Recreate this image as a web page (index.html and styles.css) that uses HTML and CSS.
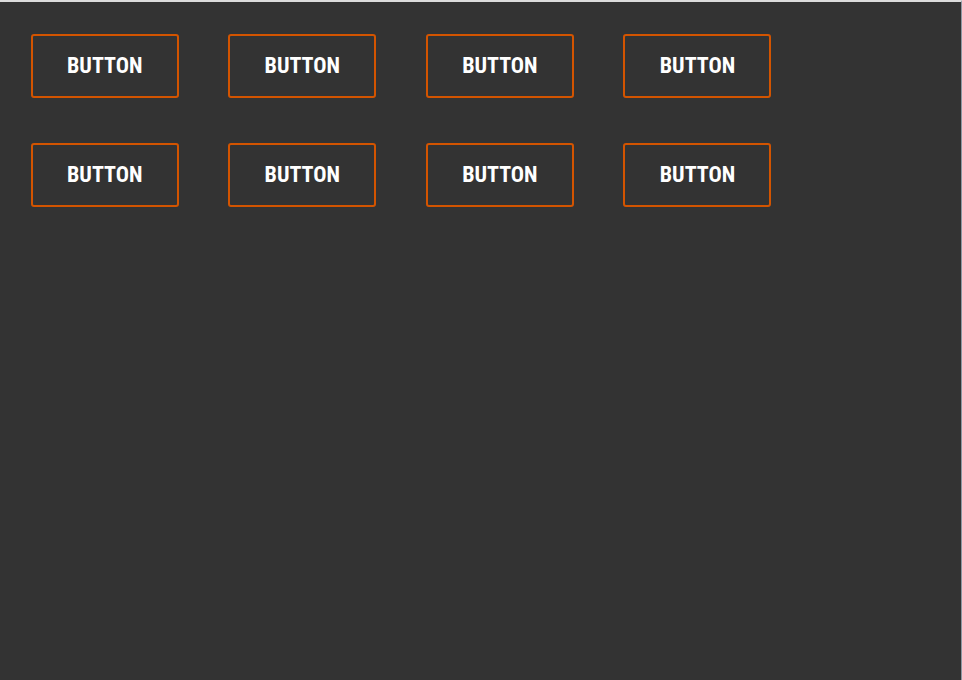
FILE: index.html
```html
<!DOCTYPE html>
<html>
<head>
<meta charset="utf-8">
<link rel="stylesheet" href="styles.css">
</head>
<body>
<div class="page">
  <div class="grid">
    <button class="btn">BUTTON</button>
    <button class="btn">BUTTON</button>
    <button class="btn">BUTTON</button>
    <button class="btn">BUTTON</button>
    <button class="btn">BUTTON</button>
    <button class="btn">BUTTON</button>
    <button class="btn">BUTTON</button>
    <button class="btn">BUTTON</button>
  </div>
</div>
</body>
</html>
```
FILE: styles.css
```css
html, body {
  margin: 0;
  padding: 0;
  height: 100%;
  background: #333333;
}
.page {
  box-sizing: border-box;
  height: 680px;
  width: 962px;
  border-top: 2px solid #dcdcdc;
  border-right: 1px solid #8d98a3;
  background: #333333;
  padding: 32px 0 0 30.7px;
}
.grid {
  display: grid;
  grid-template-columns: repeat(4, 148px);
  column-gap: 49.6px;
  row-gap: 45px;
}
.btn {
  box-sizing: border-box;
  width: 148px;
  height: 64px;
  border: 2px solid #d35400;
  border-radius: 3px;
  background: transparent;
  color: #ffffff;
  font-family: Roboto, "DejaVu Sans Condensed", sans-serif;
  font-stretch: 75%;
  font-weight: 700;
  font-size: 22px;
  padding: 0 0 1px 0;
  margin: 0;
  text-align: center;
}
```
